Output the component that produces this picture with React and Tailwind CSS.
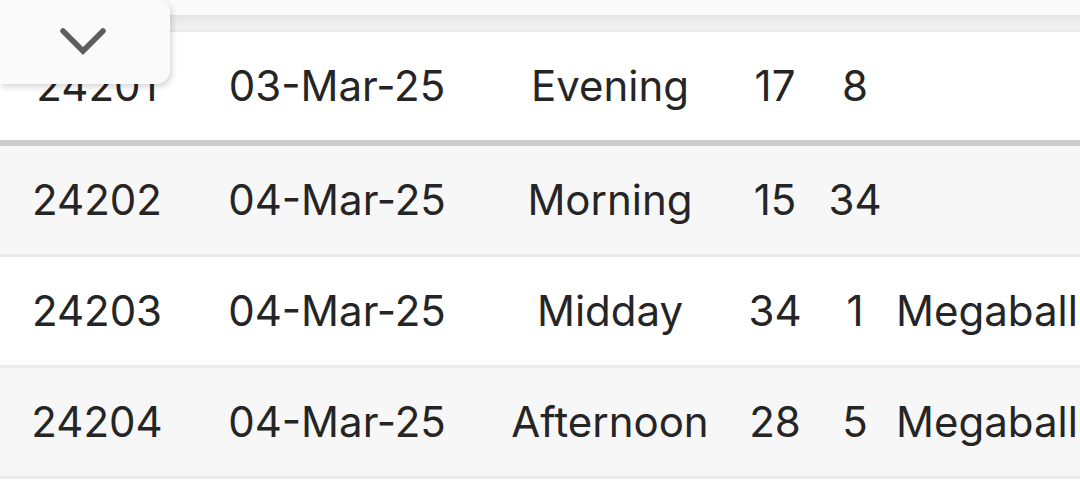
const rows = [
  { id: "24201", date: "03-Mar-25", time: "Evening", a: "17", b: "8", extra: "" },
  { id: "24202", date: "04-Mar-25", time: "Morning", a: "15", b: "34", extra: "" },
  { id: "24203", date: "04-Mar-25", time: "Midday", a: "34", b: "1", extra: "Megaball" },
  { id: "24204", date: "04-Mar-25", time: "Afternoon", a: "28", b: "5", extra: "Megaball" },
];

const Row = ({ row, i }) => {
  const first = i === 0;
  return (
    <div
      className={`flex items-center text-[#252525] ${
        i % 2 === 1 ? "bg-[#f7f7f7]" : "bg-white"
      } ${
        first
          ? "h-[114px] border-b-[6px] border-[#cccccc]"
          : "h-[111px] border-b-[3px] border-[#ebebeb]"
      }`}
    >
      <div className="w-[194px] text-center">{row.id}</div>
      <div className="w-[286px] text-center">{row.date}</div>
      <div className="w-[260px] text-center">{row.time}</div>
      <div className="w-[70px] text-center">{row.a}</div>
      <div className="w-[90px] text-center">{row.b}</div>
      <div className="flex-1 -ml-[4px] whitespace-nowrap overflow-hidden py-3">{row.extra}</div>
    </div>
  );
};

export default function App() {
  return (
    <div
      className="relative w-[1080px] h-[500px] overflow-hidden bg-white text-[42px] leading-none"
      style={{ fontFamily: "Inter, 'Open Sans', sans-serif" }}
    >
      {/* top bar */}
      <div className="h-[15px] bg-[#fafafa]"></div>
      <div className="h-[14px] bg-linear-to-b from-[#e4e4e4] to-[#f4f4f4]"></div>
      <div className="h-[3px] bg-[#ebebeb]"></div>

      {/* results */}
      {rows.map((row, i) => (
        <Row key={row.id} row={row} i={i} />
      ))}

      {/* collapse tab */}
      <div className="absolute left-0 top-0 w-[170px] h-[84px] bg-[#fafafa] rounded-br-[14px] rounded-tr-[10px] shadow-[2px_3px_6px_rgba(0,0,0,0.16)] flex justify-center pt-[24px]">
        <svg width="54" height="34" viewBox="0 0 54 34" className="ml-[-4px]">
          <path
            d="M7 7 L27 27 L47 7"
            fill="none"
            stroke="#5e5e5e"
            strokeWidth="5.5"
            strokeLinecap="round"
            strokeLinejoin="miter"
          />
        </svg>
      </div>
    </div>
  );
}
